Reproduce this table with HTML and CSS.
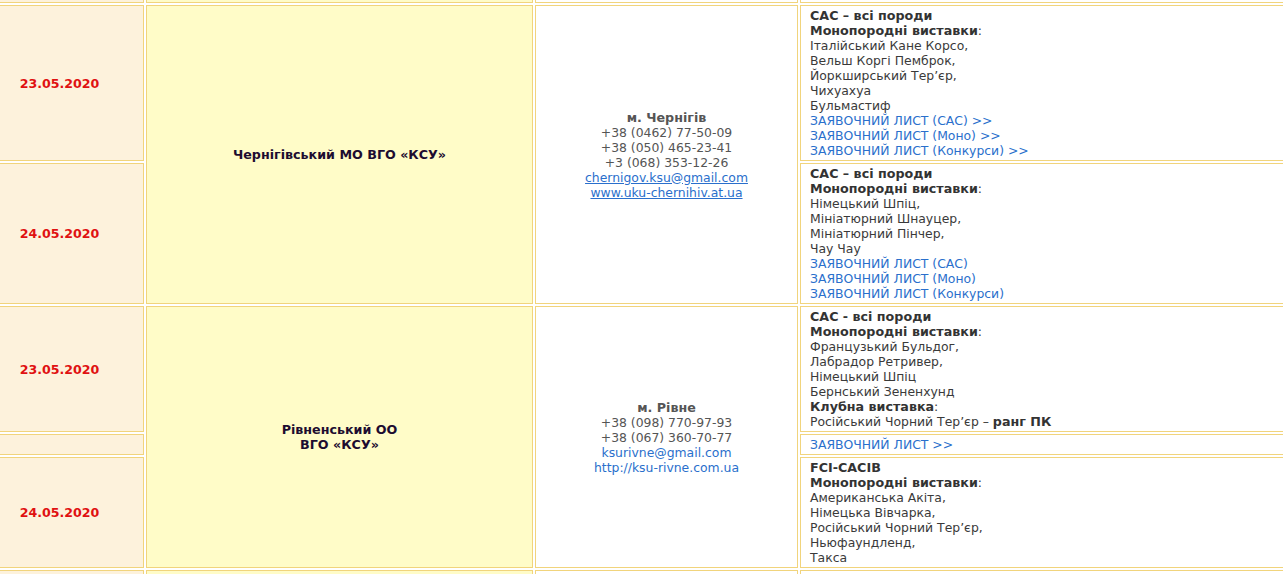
FILE: index.html
```html
<!DOCTYPE html>
<html lang="uk">
<head>
<meta charset="utf-8">
<title>Виставки</title>
<link rel="stylesheet" href="styles.css">
</head>
<body>
<table class="shows">
  <colgroup>
    <col class="col-date">
    <col class="col-org">
    <col class="col-contact">
    <col class="col-info">
  </colgroup>
  <tr class="row-prev">
    <td class="date"></td>
    <td class="org"></td>
    <td class="contact"></td>
    <td class="info"></td>
  </tr>
  <tr>
    <td class="date">23.05.2020</td>
    <td class="org" rowspan="2">Чернігівський МО ВГО «КСУ»</td>
    <td class="contact" rowspan="2">
      <b class="city">м. Чернігів</b><br>
      +38 (0462) 77-50-09<br>
      +38 (050) 465-23-41<br>
      +3 (068) 353-12-26<br>
      <a class="u" href="#">chernigov.ksu@gmail.com</a><br>
      <a class="u" href="#">www.uku-chernihiv.at.ua</a>
    </td>
    <td class="info">
      <b>САС – всі породи</b><br>
      <b>Монопородні виставки</b>:<br>
      Італійський Кане Корсо,<br>
      Вельш Коргі Пемброк,<br>
      Йоркширський Тер’єр,<br>
      Чихуахуа<br>
      Бульмастиф<br>
      <a href="#">ЗАЯВОЧНИЙ ЛИСТ (САС) &gt;&gt;</a><br>
      <a href="#">ЗАЯВОЧНИЙ ЛИСТ (Моно) &gt;&gt;</a><br>
      <a href="#">ЗАЯВОЧНИЙ ЛИСТ (Конкурси) &gt;&gt;</a>
    </td>
  </tr>
  <tr>
    <td class="date">24.05.2020</td>
    <td class="info">
      <b>САС – всі породи</b><br>
      <b>Монопородні виставки</b>:<br>
      Німецький Шпіц,<br>
      Мініатюрний Шнауцер,<br>
      Мініатюрний Пінчер,<br>
      Чау Чау<br>
      <a href="#">ЗАЯВОЧНИЙ ЛИСТ (САС)</a><br>
      <a href="#">ЗАЯВОЧНИЙ ЛИСТ (Моно)</a><br>
      <a href="#">ЗАЯВОЧНИЙ ЛИСТ (Конкурси)</a>
    </td>
  </tr>
  <tr>
    <td class="date">23.05.2020</td>
    <td class="org" rowspan="3">Рівненський ОО<br>ВГО «КСУ»</td>
    <td class="contact" rowspan="3">
      <b class="city">м. Рівне</b><br>
      +38 (098) 770-97-93<br>
      +38 (067) 360-70-77<br>
      <a href="#">ksurivne@gmail.com</a><br>
      <a href="#">http://ksu-rivne.com.ua</a>
    </td>
    <td class="info">
      <b>САС - всі породи</b><br>
      <b>Монопородні виставки</b>:<br>
      Французький Бульдог,<br>
      Лабрадор Ретривер,<br>
      Німецький Шпіц<br>
      Бернський Зененхунд<br>
      <b>Клубна виставка</b>:<br>
      Російський Чорний Тер’єр – <b>ранг ПК</b>
    </td>
  </tr>
  <tr>
    <td class="date"></td>
    <td class="info"><a href="#">ЗАЯВОЧНИЙ ЛИСТ &gt;&gt;</a></td>
  </tr>
  <tr>
    <td class="date">24.05.2020</td>
    <td class="info">
      <b>FCI-CACIB</b><br>
      <b>Монопородні виставки</b>:<br>
      Американська Акіта,<br>
      Німецька Вівчарка,<br>
      Російський Чорний Тер’єр,<br>
      Ньюфаундленд,<br>
      Такса
    </td>
  </tr>
  <tr class="row-next">
    <td class="date"></td>
    <td class="org"></td>
    <td class="contact"></td>
    <td class="info"></td>
  </tr>
</table>
</body>
</html>
```

FILE: styles.css
```css
html, body {
  margin: 0;
  padding: 0;
  background: #ffffff;
  overflow: hidden;
}

body {
  font-family: "DejaVu Sans", Verdana, sans-serif;
  font-size: 12.4px;
  line-height: 15px;
  color: #333333;
}

b {
  font-size: 12.7px;
}

.shows {
  border-collapse: separate;
  border-spacing: 2px;
  table-layout: fixed;
  width: 1329px;
  margin-left: -27px;
  margin-top: -39px;
}

.col-date { width: 169px; }
.col-org { width: 387px; }
.col-contact { width: 263px; }
.col-info { width: 510px; }

.shows td {
  box-sizing: border-box;
  border: 1px solid #f1d47c;
  padding: 2px 0;
  vertical-align: middle;
}

.row-prev td {
  height: 40px;
}

.row-next td {
  height: 60px;
}

.shows td.date {
  background: #fdf2dc;
  color: #e01111;
  font-size: 12.6px;
  font-weight: bold;
  text-align: center;
}

.shows td.org {
  background: #fffcc8;
  color: #1d0c30;
  font-size: 12.7px;
  font-weight: bold;
  text-align: center;
}

.shows td.contact {
  background: #ffffff;
  color: #555555;
  text-align: center;
}

.city {
  color: #555555;
}

.shows td.info {
  background: #ffffff;
  padding: 2px 9px;
  vertical-align: top;
  color: #3a3a3a;
}

.info b {
  color: #333333;
}

a {
  color: #2a6fcc;
  text-decoration: none;
}

a.u {
  text-decoration: underline;
}
```
